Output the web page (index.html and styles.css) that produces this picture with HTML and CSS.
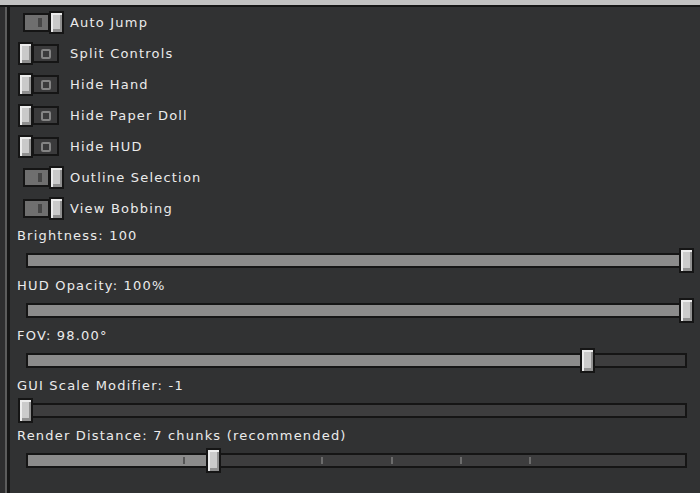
FILE: index.html
```html
<!DOCTYPE html>
<html lang="en">

<head>
    <meta charset="UTF-8">
    <meta name="viewport" content="width=device-width, initial-scale=1.0">
    <title>Video Settings</title>
    <link rel="stylesheet" href="styles.css">
</head>

<body>
    <div class="topbar"></div>
    <div class="main">
        <div class="edge"></div>
        <div class="rail"></div>
        <div class="panel">
            <!-- 开关 -->
            <div class="row">
                <div class="toggle on"><span class="track"><i class="mark"></i></span><span class="knob"></span></div>
                <span class="label">Auto Jump</span>
            </div>
            <div class="row">
                <div class="toggle off"><span class="knob"></span><span class="track"><i class="ring"></i></span></div>
                <span class="label">Split Controls</span>
            </div>
            <div class="row">
                <div class="toggle off"><span class="knob"></span><span class="track"><i class="ring"></i></span></div>
                <span class="label">Hide Hand</span>
            </div>
            <div class="row">
                <div class="toggle off"><span class="knob"></span><span class="track"><i class="ring"></i></span></div>
                <span class="label">Hide Paper Doll</span>
            </div>
            <div class="row">
                <div class="toggle off"><span class="knob"></span><span class="track"><i class="ring"></i></span></div>
                <span class="label">Hide HUD</span>
            </div>
            <div class="row">
                <div class="toggle on"><span class="track"><i class="mark"></i></span><span class="knob"></span></div>
                <span class="label">Outline Selection</span>
            </div>
            <div class="row">
                <div class="toggle on"><span class="track"><i class="mark"></i></span><span class="knob"></span></div>
                <span class="label">View Bobbing</span>
            </div>

            <!-- 滑块 -->
            <div class="slider">
                <div class="slider_label">Brightness: 100</div>
                <div class="slider_box">
                    <div class="bar"><div class="fill" style="width: 100%"></div></div>
                    <span class="handle" style="left: 100%"></span>
                </div>
            </div>
            <div class="slider">
                <div class="slider_label">HUD Opacity: 100%</div>
                <div class="slider_box">
                    <div class="bar"><div class="fill" style="width: 100%"></div></div>
                    <span class="handle" style="left: 100%"></span>
                </div>
            </div>
            <div class="slider">
                <div class="slider_label">FOV: 98.00°</div>
                <div class="slider_box">
                    <div class="bar"><div class="fill" style="width: 85%"></div></div>
                    <span class="handle" style="left: 85%"></span>
                </div>
            </div>
            <div class="slider">
                <div class="slider_label">GUI Scale Modifier: -1</div>
                <div class="slider_box">
                    <div class="bar"><div class="fill" style="width: 0%"></div></div>
                    <span class="handle" style="left: 0%"></span>
                </div>
            </div>
            <div class="slider">
                <div class="slider_label">Render Distance: 7 chunks (recommended)</div>
                <div class="slider_box">
                    <div class="bar">
                        <div class="fill" style="width: 28.5%"></div>
                        <i class="tick dark" style="left: 23.6%"></i>
                        <i class="tick" style="left: 44.6%"></i>
                        <i class="tick" style="left: 55.2%"></i>
                        <i class="tick" style="left: 65.7%"></i>
                        <i class="tick" style="left: 76.2%"></i>
                    </div>
                    <span class="handle" style="left: 28.5%"></span>
                </div>
            </div>
        </div>
    </div>
</body>

</html>
```

FILE: styles.css
```css
* {
    margin: 0;
    padding: 0;
    box-sizing: border-box;
}

body {
    width: 700px;
    height: 493px;
    overflow: hidden;
    background-color: #313233;
    font-family: "DejaVu Sans", sans-serif;
    font-size: 13px;
    letter-spacing: 1.2px;
    color: #ebebeb;
}

/* 顶部边框 */
.topbar {
    height: 7px;
    background-color: #c2c2c2;
    border-bottom: 2px solid #161616;
}

.main {
    display: flex;
    height: 486px;
}

.edge {
    width: 5px;
    background-color: #2e2e2f;
}

.rail {
    width: 5px;
    background-color: #5c5c5c;
    border-right: 3px solid #161616;
}

.panel {
    flex: 1;
    background-color: #313233;
}

/* 开关行 */
.row {
    height: 31px;
    display: flex;
    align-items: center;
}

.toggle {
    width: 46px;
    margin-left: 8px;
    display: flex;
    align-items: center;
}

.toggle.on {
    justify-content: flex-end;
}

.toggle .knob {
    width: 15px;
    height: 23px;
    background-color: #c9c9c9;
    border: 2px solid #151515;
    box-shadow: inset 2px 2px 0 #ececec, inset -2px -3px 0 #8f8f8f;
    position: relative;
    z-index: 1;
}

.toggle .track {
    width: 27px;
    height: 19px;
    border: 2px solid #151515;
    display: flex;
    align-items: center;
}

.toggle.on .track {
    background-color: #6f6f6f;
    margin-right: -1px;
}

.toggle.off .track {
    background-color: #3a3a3b;
    margin-left: -1px;
    justify-content: center;
}

.mark {
    width: 4px;
    height: 9px;
    margin-left: 13px;
    background-color: #464646;
}

.ring {
    width: 10px;
    height: 10px;
    border: 2px solid #848484;
    border-radius: 2px;
}

.label {
    margin-left: 6px;
    line-height: 20px;
}

/* 滑块 */
.slider {
    height: 50px;
}

.slider_label {
    height: 24px;
    line-height: 24px;
    padding-left: 7px;
}

.slider_box {
    height: 25px;
    margin: 0 13px 0 16px;
    padding-top: 5px;
    position: relative;
}

.bar {
    height: 15px;
    background-color: #3d3d3e;
    border: 2px solid #151515;
    position: relative;
}

.fill {
    height: 100%;
    background-color: #8b8b8b;
}

.tick {
    position: absolute;
    top: 2px;
    width: 2px;
    height: 7px;
    background-color: #6c6c6c;
}

.tick.dark {
    background-color: #555555;
}

.handle {
    position: absolute;
    top: 0;
    width: 15px;
    height: 25px;
    margin-left: -8px;
    background-color: #cbcbcb;
    border: 2px solid #151515;
    box-shadow: inset 2px 2px 0 #ededed, inset -2px -3px 0 #919191;
}
```
